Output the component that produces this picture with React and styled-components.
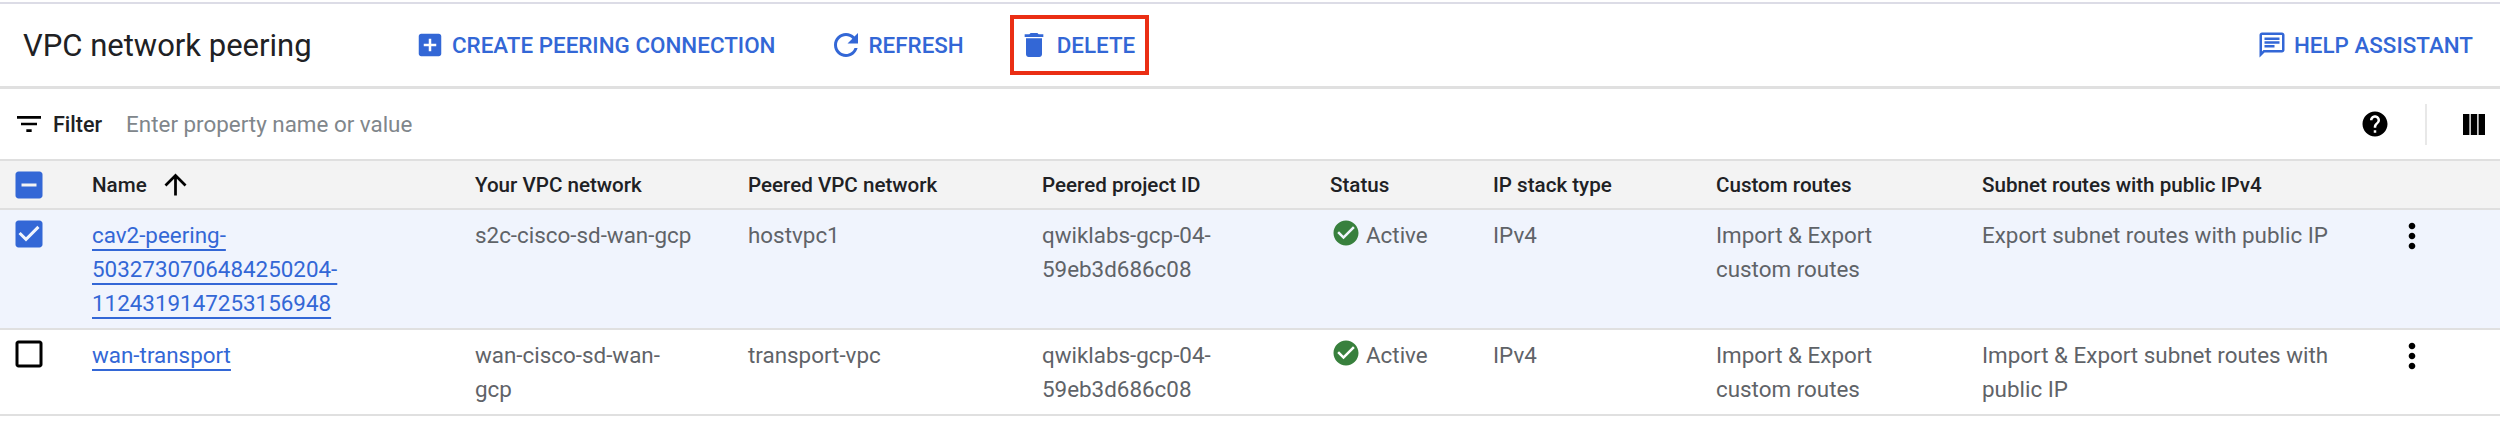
import React from 'react';
import styled, { createGlobalStyle } from 'styled-components';

const GlobalStyle = createGlobalStyle`
  html, body {
    margin: 0;
    padding: 0;
    background: #fff;
    font-family: Roboto, "Liberation Sans", sans-serif;
  }
`;

const BLUE = '#3367d6';

const Page = styled.div`
  width: 2500px;
  height: 444px;
  overflow: hidden;
  background: #fff;
  padding-top: 2px;
  box-sizing: border-box;
`;

const Toolbar = styled.header`
  display: flex;
  align-items: center;
  box-sizing: border-box;
  height: 87px;
  border-top: 2px solid #dcdce6;
  border-bottom: 3px solid #e0e0e0;
  padding-left: 23px;
  padding-right: 27px;
`;

const Title = styled.h1`
  margin: 0;
  width: 392px;
  font-size: 31px;
  font-weight: 400;
  color: #202124;
  white-space: nowrap;
`;

const ToolButton = styled.button`
  display: flex;
  align-items: center;
  gap: ${(p) => p.$gap}px;
  height: 60px;
  box-sizing: border-box;
  margin-left: ${(p) => p.$left || 0}px;
  padding: 0 ${(p) => (p.$flagged ? 10 : 0)}px 0 ${(p) => (p.$flagged ? 4 : 0)}px;
  border: ${(p) => (p.$flagged ? '4px solid #ea2e14' : 'none')};
  background: none;
  color: ${BLUE};
  font-family: inherit;
  font-size: 22.4px;
  font-weight: 500;
  white-space: nowrap;
`;

const Push = styled.div`
  flex: 1;
`;

const FilterBar = styled.div`
  display: flex;
  align-items: center;
  height: 70px;
  padding-left: 13px;
  padding-right: 15px;
  font-size: 22.4px;
`;

const FilterLabel = styled.span`
  margin-left: 8px;
  font-size: 21.5px;
  font-weight: 500;
  color: #202124;
`;

const FilterInput = styled.span`
  margin-left: 24px;
  color: #80868b;
  flex: 1;
`;

const Divider = styled.div`
  width: 2px;
  height: 41px;
  background: #e8e8e8;
  margin: 0 36px 0 35px;
`;

const Table = styled.table`
  width: 2500px;
  table-layout: fixed;
  border-collapse: collapse;
  font-size: 22.4px;
  line-height: 34px;
  color: #5f6368;
`;

const HeadRow = styled.tr`
  background: #f3f3f3;
  border-top: 2px solid #dfdfdf;
  border-bottom: 2px solid #dfdfdf;
`;

const Th = styled.th`
  padding: 0;
  height: 47px;
  font-size: 20.6px;
  font-weight: 500;
  text-align: left;
  color: #202124;
  white-space: nowrap;
`;

const Row = styled.tr`
  background: ${(p) => (p.$selected ? '#f0f4fd' : '#fff')};
  border-bottom: 2px solid #e0e0e0;
`;

const Td = styled.td`
  padding: 8px 0;
  vertical-align: top;
  white-space: pre-line;
`;

const BoxCell = styled.td`
  padding: 6px 0 0 11px;
  vertical-align: top;
`;

const BoxHead = styled.th`
  padding: 0 0 0 11px;
  text-align: left;
`;

const NameLink = styled.a`
  color: ${BLUE};
  text-decoration: underline;
  text-decoration-thickness: 2px;
  text-underline-offset: 6px;
  white-space: pre-line;
`;

const NameHead = styled.span`
  display: inline-flex;
  align-items: center;
  gap: 12px;
`;

const Status = styled.span`
  display: flex;
  align-items: flex-start;
  gap: 5px;
  margin-left: 1px;
`;

const Icon = styled.svg`
  display: block;
  flex: none;
  fill: ${(p) => p.$color || 'currentColor'};
`;

const paths = {
  addBox: 'M19 3H5c-1.11 0-2 .9-2 2v14c0 1.1.89 2 2 2h14c1.1 0 2-.9 2-2V5c0-1.1-.9-2-2-2zm-2 10h-4v4h-2v-4H7v-2h4V7h2v4h4v2z',
  refresh: 'M17.65 6.35C16.2 4.9 14.21 4 12 4c-4.42 0-7.99 3.58-7.99 8s3.57 8 7.99 8c3.73 0 6.84-2.55 7.73-6h-2.08c-.82 2.33-3.04 4-5.65 4-3.31 0-6-2.69-6-6s2.69-6 6-6c1.66 0 3.14.69 4.22 1.78L13 11h7V4l-2.35 2.35z',
  trash: 'M6 19c0 1.1.9 2 2 2h8c1.1 0 2-.9 2-2V7H6v12zM19 4h-3.5l-1-1h-5l-1 1H5v2h14V4z',
  chat: 'M20 2H4c-1.1 0-2 .9-2 2v18l4-4h14c1.1 0 2-.9 2-2V4c0-1.1-.9-2-2-2zm0 14H5.17L4 17.17V4h16v12zM6 12h8v2H6zm0-3h12v2H6zm0-3h12v2H6z',
  filter: 'M10 18h4v-2h-4v2zM3 6v2h18V6H3zm3 7h12v-2H6v2z',
  help: 'M12 2C6.48 2 2 6.48 2 12s4.48 10 10 10 10-4.48 10-10S17.52 2 12 2zm1 17h-2v-2h2v2zm2.07-7.75l-.9.92C13.45 12.9 13 13.5 13 15h-2v-.5c0-1.1.45-2.1 1.17-2.83l1.24-1.26c.37-.36.59-.86.59-1.41 0-1.1-.9-2-2-2s-2 .9-2 2H8c0-2.21 1.79-4 4-4s4 1.79 4 4c0 .88-.36 1.68-.93 2.25z',
  more: 'M12 8c1.1 0 2-.9 2-2s-.9-2-2-2-2 .9-2 2 .9 2 2 2zm0 2c-1.1 0-2 .9-2 2s.9 2 2 2 2-.9 2-2-.9-2-2-2zm0 6c-1.1 0-2 .9-2 2s.9 2 2 2 2-.9 2-2-.9-2-2-2z',
  up: 'M4 12l1.41 1.41L11 7.83V20h2V7.83l5.58 5.59L20 12l-8-8-8 8z',
  check: 'M12 2C6.48 2 2 6.48 2 12s4.48 10 10 10 10-4.48 10-10S17.52 2 12 2zm-2 15l-5-5 1.41-1.41L10 14.17l7.59-7.59L19 8l-9 9z',
  boxOn: 'M19 3H5c-1.11 0-2 .9-2 2v14c0 1.1.89 2 2 2h14c1.1 0 2-.9 2-2V5c0-1.1-.9-2-2-2zm-9 14l-5-5 1.41-1.41L10 14.17l7.59-7.59L19 8l-9 9z',
  boxSome: 'M19 3H5c-1.1 0-2 .9-2 2v14c0 1.1.9 2 2 2h14c1.1 0 2-.9 2-2V5c0-1.1-.9-2-2-2zm-2 10H7v-2h10v2z',
  boxOff: 'M19 5v14H5V5h14m0-2H5c-1.1 0-2 .9-2 2v14c0 1.1.9 2 2 2h14c1.1 0 2-.9 2-2V5c0-1.1-.9-2-2-2z',
};

const Glyph = ({ name, size, color }) => (
  <Icon width={size} height={size} viewBox="0 0 24 24" $color={color}>
    <path d={paths[name]} />
  </Icon>
);

const ColumnsGlyph = () => (
  <Icon width="22" height="21" viewBox="0 0 22 21" $color="#000">
    <rect x="0" y="0" width="6.4" height="21" />
    <rect x="7.8" y="0" width="6.4" height="21" />
    <rect x="15.6" y="0" width="6.4" height="21" />
  </Icon>
);

// x positions of the columns are the widths below added up
const widths = [92, 383, 273, 294, 288, 163, 223, 266, 399, 119];

const rows = [
  {
    selected: true,
    name: 'cav2-peering-\n5032730706484250204-\n1124319147253156948',
    network: 's2c-cisco-sd-wan-gcp',
    peered: 'hostvpc1',
    routes: 'Export subnet routes with public IP',
  },
  {
    selected: false,
    name: 'wan-transport',
    network: 'wan-cisco-sd-wan-\ngcp',
    peered: 'transport-vpc',
    routes: 'Import & Export subnet routes with\npublic IP',
  },
];

const heads = [
  'Your VPC network',
  'Peered VPC network',
  'Peered project ID',
  'Status',
  'IP stack type',
  'Custom routes',
  'Subnet routes with public IPv4',
];

const App = () => (
  <Page>
    <GlobalStyle />
    <Toolbar>
      <Title>VPC network peering</Title>
      <ToolButton $gap={7}>
        <Glyph name="addBox" size={30} />
        CREATE PEERING CONNECTION
      </ToolButton>
      <ToolButton $left={53} $gap={4}>
        <Glyph name="refresh" size={36} />
        REFRESH
      </ToolButton>
      <ToolButton $left={46} $gap={7} $flagged>
        <Glyph name="trash" size={32} />
        DELETE
      </ToolButton>
      <Push />
      <ToolButton $gap={7}>
        <Glyph name="chat" size={30} />
        HELP ASSISTANT
      </ToolButton>
    </Toolbar>
    <FilterBar>
      <Glyph name="filter" size={32} color="#000" />
      <FilterLabel>Filter</FilterLabel>
      <FilterInput>Enter property name or value</FilterInput>
      <Glyph name="help" size={30} color="#000" />
      <Divider />
      <ColumnsGlyph />
    </FilterBar>
    <Table>
      <colgroup>
        {widths.map((w, i) => (
          <col key={i} style={{ width: w }} />
        ))}
      </colgroup>
      <thead>
        <HeadRow>
          <BoxHead>
            <Glyph name="boxSome" size={36} color={BLUE} />
          </BoxHead>
          <Th>
            <NameHead>
              Name
              <Glyph name="up" size={33} color="#000" />
            </NameHead>
          </Th>
          {heads.map((h) => (
            <Th key={h}>{h}</Th>
          ))}
          <Th />
        </HeadRow>
      </thead>
      <tbody>
        {rows.map((r) => (
          <Row key={r.name} $selected={r.selected}>
            <BoxCell>
              {r.selected ? (
                <Glyph name="boxOn" size={36} color={BLUE} />
              ) : (
                <Glyph name="boxOff" size={36} color="#000" />
              )}
            </BoxCell>
            <Td>
              <NameLink>{r.name}</NameLink>
            </Td>
            <Td>{r.network}</Td>
            <Td>{r.peered}</Td>
            <Td>{'qwiklabs-gcp-04-\n59eb3d686c08'}</Td>
            <Td>
              <Status>
                <Glyph name="check" size={30} color="#38803d" />
                Active
              </Status>
            </Td>
            <Td>IPv4</Td>
            <Td>{'Import & Export\ncustom routes'}</Td>
            <Td>{r.routes}</Td>
            <BoxCell>
              <Glyph name="more" size={40} color="#000" />
            </BoxCell>
          </Row>
        ))}
      </tbody>
    </Table>
  </Page>
);

export default App;
